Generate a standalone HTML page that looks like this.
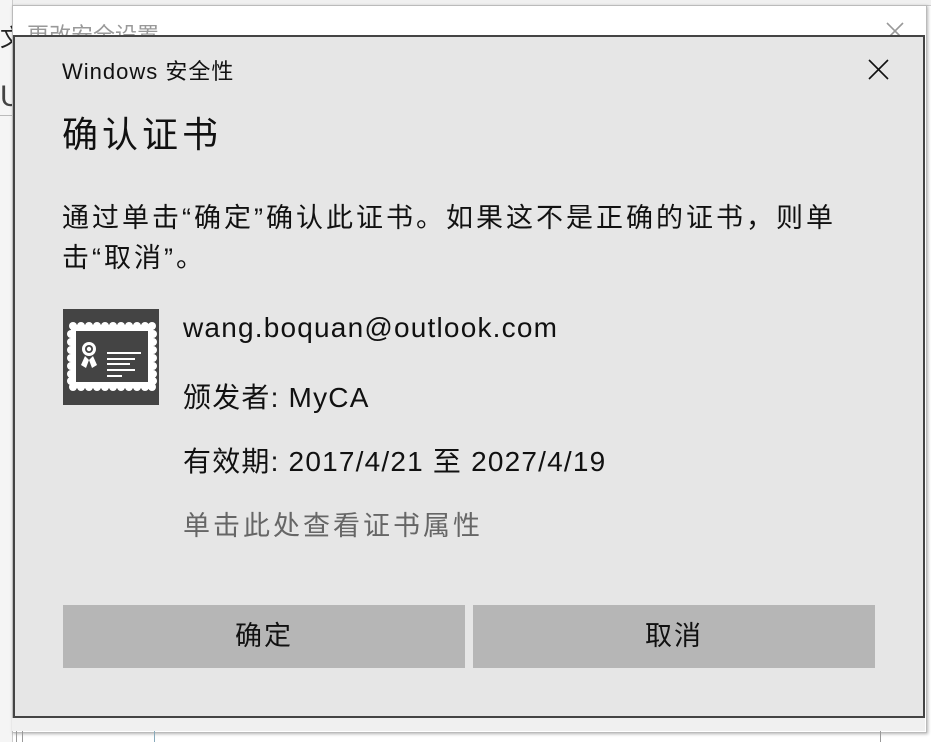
<!DOCTYPE html>
<html><head><meta charset="utf-8"><style>
body{margin:0;width:931px;height:742px;overflow:hidden;background:#fff;position:relative;font-family:"Liberation Sans","Noto Sans CJK SC",sans-serif;}
.abs{position:absolute;white-space:nowrap}
</style></head><body>
<div class="abs" style="left:0;top:0;width:931px;height:5px;background:#f0f0f0;border-bottom:1px solid #ccc"></div>
<div class="abs" style="left:0;top:0;width:12px;height:742px;background:#f5f5f5;border-right:1px solid #ccc"></div>
<div class="abs" style="left:0;top:18px;font-size:24px;color:#222">文</div>
<div class="abs" style="left:0;top:80px;font-size:30px;color:#444">U</div>
<div class="abs" style="left:0;top:115px;width:12px;height:1px;background:#bbb"></div>
<div class="abs" style="left:12px;top:5px;width:913px;height:726px;background:#fff;border:1px solid #bbb;box-shadow:1px 1px 3px rgba(0,0,0,.3)"></div>
<div class="abs" style="left:27px;top:18px;font-size:22px;color:#999">更改安全设置</div>
<svg class="abs" style="left:886px;top:22px" width="18" height="18"><path d="M1 1L17 17M17 1L1 17" stroke="#999" stroke-width="1.6"/></svg>
<div class="abs" style="left:12px;top:718px;width:913px;height:13px;background:#f0f0f0"></div>
<div class="abs" style="left:16px;top:731px;width:1px;height:11px;background:#999"></div>
<div class="abs" style="left:22px;top:731px;width:1px;height:11px;background:#999"></div>
<div class="abs" style="left:154px;top:731px;width:1px;height:11px;background:#8ab"></div>
<div class="abs" style="left:880px;top:731px;width:1px;height:11px;background:#999"></div>
<!-- dialog -->
<div class="abs" style="left:13px;top:35px;width:908px;height:679px;background:#e6e6e6;border:2px solid #444"></div>
<div class="abs" style="left:62px;top:54px;font-size:22px;letter-spacing:1px;color:#111">Windows 安全性</div>
<svg class="abs" style="left:868px;top:59px" width="21" height="21"><path d="M1 1L20 20M20 1L1 20" stroke="#111" stroke-width="1.6"/></svg>
<div class="abs" style="left:62px;top:106px;font-size:36px;letter-spacing:4px;color:#111">确认证书</div>
<div class="abs" style="left:62px;top:198px;font-size:27px;letter-spacing:3px;color:#111;line-height:40px">通过单击“确定”确认此证书。如果这不是正确的证书，则单<br>击“取消”。</div>
<svg class="abs" style="left:63px;top:309px" width="96" height="96" viewBox="0 0 96 96">
<rect width="96" height="96" fill="#444"/>
<g fill="#fff">
<rect x="8" y="16" width="82" height="63"/>
<circle cx="10" cy="17" r="4"/><circle cx="18" cy="17" r="4"/><circle cx="26" cy="17" r="4"/><circle cx="34" cy="17" r="4"/><circle cx="42" cy="17" r="4"/><circle cx="50" cy="17" r="4"/><circle cx="58" cy="17" r="4"/><circle cx="66" cy="17" r="4"/><circle cx="74" cy="17" r="4"/><circle cx="82" cy="17" r="4"/><circle cx="89" cy="17" r="4"/>
<circle cx="10" cy="78" r="4"/><circle cx="18" cy="78" r="4"/><circle cx="26" cy="78" r="4"/><circle cx="34" cy="78" r="4"/><circle cx="42" cy="78" r="4"/><circle cx="50" cy="78" r="4"/><circle cx="58" cy="78" r="4"/><circle cx="66" cy="78" r="4"/><circle cx="74" cy="78" r="4"/><circle cx="82" cy="78" r="4"/><circle cx="89" cy="78" r="4"/>
<circle cx="8" cy="25" r="4"/><circle cx="8" cy="33" r="4"/><circle cx="8" cy="41" r="4"/><circle cx="8" cy="49" r="4"/><circle cx="8" cy="57" r="4"/><circle cx="8" cy="65" r="4"/><circle cx="8" cy="72" r="4"/>
<circle cx="90" cy="25" r="4"/><circle cx="90" cy="33" r="4"/><circle cx="90" cy="41" r="4"/><circle cx="90" cy="49" r="4"/><circle cx="90" cy="57" r="4"/><circle cx="90" cy="65" r="4"/><circle cx="90" cy="72" r="4"/>
</g>
<rect x="13" y="22" width="72" height="51" fill="#444"/>
<circle cx="26" cy="40" r="7" fill="#fff"/><circle cx="26" cy="40" r="4" fill="#444"/><circle cx="26" cy="40" r="2.2" fill="#fff"/>
<path d="M22 47l-4 9 5 3 3-8zM30 47l4 9-5 3-3-8z" fill="#fff"/>
<rect x="44" y="43" width="34" height="2" fill="#fff"/><rect x="44" y="49" width="28" height="2" fill="#fff"/><rect x="44" y="54" width="23" height="2" fill="#fff"/><rect x="44" y="60" width="28" height="2" fill="#fff"/><rect x="44" y="66" width="15" height="2" fill="#fff"/>
</svg>
<div class="abs" style="left:183px;top:312px;font-size:28px;letter-spacing:1.2px;color:#111">wang.boquan@outlook.com</div>
<div class="abs" style="left:183px;top:376px;font-size:28px;letter-spacing:1.2px;color:#111">颁发者: MyCA</div>
<div class="abs" style="left:183px;top:440px;font-size:28px;letter-spacing:1.2px;color:#111">有效期: 2017/4/21 至 2027/4/19</div>
<div class="abs" style="left:183px;top:504px;font-size:27px;letter-spacing:3px;color:#666">单击此处查看证书属性</div>
<div class="abs" style="left:63px;top:605px;width:402px;height:63px;background:#b6b6b6;font-size:27px;letter-spacing:2px;color:#111;text-align:center;line-height:63px">确定</div>
<div class="abs" style="left:473px;top:605px;width:402px;height:63px;background:#b6b6b6;font-size:27px;letter-spacing:2px;color:#111;text-align:center;line-height:63px">取消</div>
</body></html>
